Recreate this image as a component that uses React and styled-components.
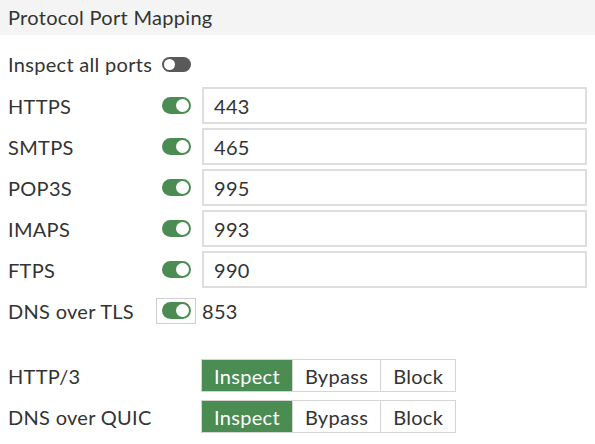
import React, { useState } from "react";
import styled, { createGlobalStyle } from "styled-components";

const GlobalStyle = createGlobalStyle`
	body {
		margin: 0;
		background: #ffffff;
		font-family: Lato, "Open Sans", sans-serif;
		letter-spacing: 0.3px;
		color: #333333;
	}
`;

const GREEN = "#4a8c52";
const FONT_SIZE = "20px";

const ports = [
	{ name: "HTTPS", port: "443" },
	{ name: "SMTPS", port: "465" },
	{ name: "POP3S", port: "995" },
	{ name: "IMAPS", port: "993" },
	{ name: "FTPS", port: "990" },
];

function Toggle({ on }) {
	return (
		<Track $on={on}>
			<Knob $on={on} />
		</Track>
	);
}

function ModeGroup({ value, onChange }) {
	return (
		<Group>
			{["Inspect", "Bypass", "Block"].map((opt) => (
				<ModeBtn key={opt} $active={value === opt} onClick={() => onChange(opt)}>
					{opt}
				</ModeBtn>
			))}
		</Group>
	);
}

export default function App() {
	const [http3, setHttp3] = useState("Inspect");
	const [quic, setQuic] = useState("Inspect");

	return (
		<>
			<GlobalStyle />
			<Panel>
				<Header>Protocol Port Mapping</Header>
				<Body>
					<AllPortsRow>
						Inspect all ports
						<Toggle on={false} />
					</AllPortsRow>
					{ports.map((p) => (
						<Row key={p.name}>
							<Label>{p.name}</Label>
							<ToggleCell>
								<Toggle on />
							</ToggleCell>
							<PortInput defaultValue={p.port} />
						</Row>
					))}
					<Row>
						<Label>DNS over TLS</Label>
						<ToggleCell>
							<ToggleBox>
								<Toggle on />
							</ToggleBox>
						</ToggleCell>
						<PortText>853</PortText>
					</Row>
					<Spacer />
					<Row>
						<ModeLabel>HTTP/3</ModeLabel>
						<ModeGroup value={http3} onChange={setHttp3} />
					</Row>
					<Row>
						<ModeLabel>DNS over QUIC</ModeLabel>
						<ModeGroup value={quic} onChange={setQuic} />
					</Row>
				</Body>
			</Panel>
		</>
	);
}

const Panel = styled.div`
	width: 595px;
	height: 444px;
	overflow: hidden;
`;

const Header = styled.div`
	height: 35px;
	background: #f4f4f4;
	padding-left: 8px;
	font-size: ${FONT_SIZE};
	line-height: 34px;
	color: #333;
`;

const Body = styled.div`
	padding: 12px 8px 0 8px;
`;

const AllPortsRow = styled.div`
	display: flex;
	align-items: center;
	gap: 10px;
	height: 34px;
	margin-bottom: 4px;
	font-size: ${FONT_SIZE};
`;

const Row = styled.div`
	display: flex;
	align-items: center;
	height: 41px;
	font-size: ${FONT_SIZE};
`;

const Label = styled.div`
	width: 148px;
	flex-shrink: 0;
`;

const ModeLabel = styled.div`
	width: 193px;
	flex-shrink: 0;
`;

const ToggleCell = styled.div`
	width: 46px;
	flex-shrink: 0;
	display: flex;
	align-items: center;
	padding-left: 6px;
	box-sizing: border-box;
`;

const ToggleBox = styled.div`
	margin-left: -6px;
	width: 40px;
	height: 26px;
	box-sizing: border-box;
	border: 1px solid #cfcfcf;
	display: flex;
	align-items: center;
	padding-left: 5px;
`;

const Track = styled.div`
	position: relative;
	width: 29px;
	height: ${(p) => (p.$on ? "17px" : "15px")};
	border-radius: 10px;
	background: ${(p) => (p.$on ? GREEN : "#595959")};
	flex-shrink: 0;
`;

const Knob = styled.div`
	position: absolute;
	top: 2px;
	${(p) => (p.$on ? "right: 2px;" : "left: 2px;")}
	width: ${(p) => (p.$on ? "13px" : "11px")};
	height: ${(p) => (p.$on ? "13px" : "11px")};
	border-radius: 50%;
	background: #ffffff;
`;

const PortInput = styled.input`
	width: 385px;
	height: 37px;
	box-sizing: border-box;
	border: 2px solid #dedede;
	padding: 0 10px;
	font-family: Lato, "Open Sans", sans-serif;
	font-size: ${FONT_SIZE};
	letter-spacing: 0.3px;
	color: #333;
	outline: none;
`;

const PortText = styled.span``;

const Spacer = styled.div`
	height: 24px;
`;

const Group = styled.div`
	display: flex;
`;

const ModeBtn = styled.button`
	height: 33px;
	padding: 0 12px;
	font-family: Lato, "Open Sans", sans-serif;
	font-size: ${FONT_SIZE};
	letter-spacing: 0.3px;
	border: 1px solid #d4d4d4;
	border-left-width: 0;
	background: ${(p) => (p.$active ? GREEN : "#ffffff")};
	color: ${(p) => (p.$active ? "#ffffff" : "#333333")};
	cursor: pointer;

	&:first-child {
		border-left-width: 1px;
	}
`;
